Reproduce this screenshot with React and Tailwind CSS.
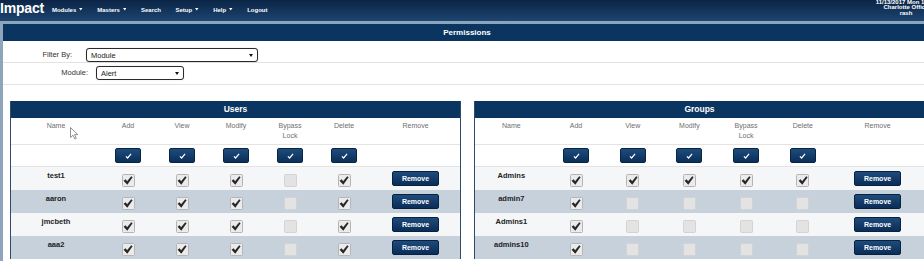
import React from "react";

function Tri({ color = "#fff", w = 4, h = 3 }) {
  return (
    <svg width={w} height={h} viewBox="0 0 4 3" className="block">
      <path d="M0 0 L4 0 L2 3 Z" fill={color} />
    </svg>
  );
}

function NavItem({ label, caret }) {
  return (
    <div className="flex items-center text-white font-bold text-[6px] leading-[6px]">
      <span>{label}</span>
      {caret && (
        <span className="ml-[3px]">
          <Tri w={3.5} h={2.5} />
        </span>
      )}
    </div>
  );
}

function Select({ value, width }) {
  return (
    <div
      className="h-[14px] border border-[#2a2a2a] rounded-[3px] bg-white flex items-center justify-between pl-[4px] pr-[4px] shadow-[0_0_1px_rgba(0,0,0,0.3)]"
      style={{ width }}
    >
      <span className="text-[7.5px] leading-[9px] text-[#222]">{value}</span>
      <Tri color="#111" w={4} h={3} />
    </div>
  );
}

function CheckAll() {
  return (
    <div className="w-[26px] h-[15px] rounded-[2px] bg-gradient-to-b from-[#1f4c7b] to-[#0a2f5a] border border-[#062444] flex items-center justify-center">
      <svg width="7" height="6" viewBox="0 0 7 6">
        <path d="M0.9 3.3 L2.6 5 L6.1 0.9" stroke="#fff" strokeWidth="1.2" fill="none" />
      </svg>
    </div>
  );
}

function Box({ checked }) {
  return (
    <div
      className={
        "w-[13px] h-[13px] rounded-[1.5px] border flex items-center justify-center " +
        (checked ? "border-[#b5b5b5] bg-[#ebebeb]" : "border-[#d3d3d3] bg-[#e3e3e3]")
      }
    >
      {checked && (
        <svg width="10" height="9" viewBox="0 0 11 10">
          <path d="M0.6 5.4 L2.9 3.7 L4.5 5.8 L9.1 0.3 L10.6 1.5 L4.7 9.6 Z" fill="#262626" />
        </svg>
      )}
    </div>
  );
}

function RemoveBtn() {
  return (
    <div className="w-[47px] h-[15px] rounded-[2px] bg-gradient-to-b from-[#1e4b7c] to-[#0a2d58] border border-[#06223f] flex items-center justify-center text-white font-bold text-[7px] leading-[8px]">
      Remove
    </div>
  );
}

function Panel({ title, cols, rows }) {
  const headers = ["Name", "Add", "View", "Modify", "Bypass\nLock", "Delete", "Remove"];
  return (
    <div className="w-[451px] border-x border-[#2f4b6c]">
      <div className="h-[17px] bg-[#0b3561] flex items-center justify-center text-white font-bold text-[8.5px]">
        {title}
      </div>
      <div className={"grid h-[27px] border-b border-[#e3e3e3] bg-white " + cols}>
        {headers.map((h) => (
          <div
            key={h}
            className="text-center text-[7px] leading-[9.6px] text-[#6e6e6e] pt-[3px] whitespace-pre-line"
          >
            {h}
          </div>
        ))}
      </div>
      <div className={"grid h-[22px] border-b border-[#e3e3e3] bg-white " + cols}>
        <div />
        {[0, 1, 2, 3, 4].map((i) => (
          <div key={i} className="flex justify-center pt-[3px]">
            <CheckAll />
          </div>
        ))}
        <div />
      </div>
      {rows.map((r, idx) => (
        <div
          key={r.name}
          className={
            "grid h-[23px] " + cols + " " + (idx % 2 === 0 ? "bg-[#f4f6f8]" : "bg-[#c6d1dc]")
          }
        >
          <div className="text-center font-bold text-[7.5px] leading-[10px] text-[#222] pt-[3.5px]">
            {r.name}
          </div>
          {r.checks.map((c, i) => (
            <div key={i} className="flex justify-center pt-[7px]">
              <Box checked={c} />
            </div>
          ))}
          <div className="flex justify-center pt-[4px]">
            <RemoveBtn />
          </div>
        </div>
      ))}
    </div>
  );
}

export default function App() {
  const users = [
    { name: "test1", checks: [true, true, true, false, true] },
    { name: "aaron", checks: [true, true, true, false, true] },
    { name: "jmcbeth", checks: [true, true, true, false, true] },
    { name: "aaa2", checks: [true, true, true, false, true] },
  ];
  const groups = [
    { name: "Admins", checks: [true, true, true, true, true] },
    { name: "admin7", checks: [true, false, false, false, false] },
    { name: "Admins1", checks: [true, false, false, false, false] },
    { name: "admins10", checks: [true, false, false, false, false] },
  ];
  return (
    <div className='relative w-[924px] h-[261px] overflow-hidden bg-white font-["Liberation_Sans",Arial,sans-serif]'>
      <div className="w-[940px]">
        {/* Nav */}
        <div className="h-[21px] flex items-start bg-gradient-to-b from-[#0b2546] to-[#1d4571]">
          <div className="text-white font-bold text-[14px] leading-[14px] mt-[0.5px] tracking-[-0.2px]">
            Impact
          </div>
          <div className="flex items-center gap-[14.5px] ml-[8px] mt-[6.5px]">
            <NavItem label="Modules" caret />
            <NavItem label="Masters" caret />
            <NavItem label="Search" />
            <NavItem label="Setup" caret />
            <NavItem label="Help" caret />
            <NavItem label="Logout" />
          </div>
          <div className="ml-auto mr-[2px] w-[64px] text-center text-white font-bold text-[6px] leading-[5.4px] whitespace-nowrap">
            <div>11/13/2017 Mon 10:15</div>
            <div>Charlotte Office</div>
            <div>rash</div>
          </div>
        </div>
        <div className="h-[3px] bg-[#8ba3bb]" />

        {/* Main panel */}
        <div className="w-[931px] h-[240px] border-l-[3px] border-[#8ea5bc] bg-white">
          <div className="h-[17px] bg-[#0b3561] flex items-center justify-center text-white font-bold text-[8px]">
            Permissions
          </div>
          <div className="h-[22px] border-b border-[#e2e2e2] flex items-start pt-[7px]">
            <div className="w-[69px] text-right text-[7.5px] leading-[14px] text-[#333]">Filter By:</div>
            <div className="ml-[14px]">
              <Select value="Module" width={172} />
            </div>
          </div>
          <div className="h-[22px] border-b border-[#e2e2e2] flex items-start pt-[3px]">
            <div className="w-[85px] text-right text-[7.5px] leading-[14px] text-[#333]">Module:</div>
            <div className="ml-[8px]">
              <Select value="Alert" width={88} />
            </div>
          </div>

          <div className="flex mt-[16px] ml-[7px] gap-[13px]">
            <Panel
              title="Users"
              cols="grid-cols-[90px_repeat(5,54px)_89px]"
              rows={users}
            />
            <Panel
              title="Groups"
              cols="grid-cols-[72.7px_repeat(5,56.7px)_1fr]"
              rows={groups}
            />
          </div>
        </div>
      </div>

      {/* mouse cursor */}
      <svg
        className="absolute left-[70px] top-[127px]"
        width="9"
        height="13"
        viewBox="0 0 9 13"
      >
        <path
          d="M0.5 0.5 L0.5 10.5 L3 8.2 L4.8 12 L6.3 11.3 L4.6 7.6 L7.8 7.6 Z"
          fill="#fff"
          stroke="#777"
          strokeWidth="0.8"
        />
      </svg>
    </div>
  );
}
